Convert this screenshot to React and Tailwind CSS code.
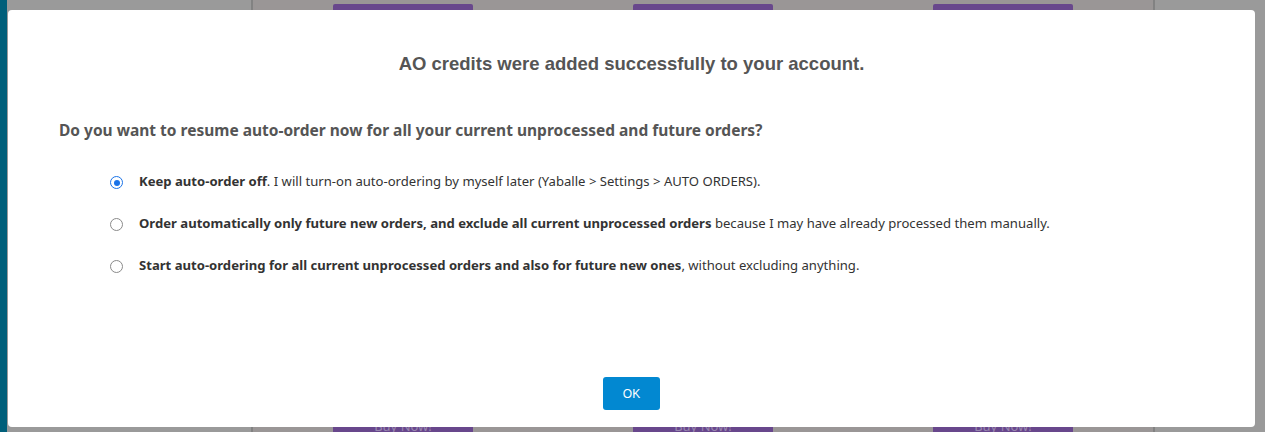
import { useState } from "react";

const options = [
    { bold: "Keep auto-order off", rest: ". I will turn-on auto-ordering by myself later (Yaballe > Settings > AUTO ORDERS)." },
    { bold: "Order automatically only future new orders, and exclude all current unprocessed orders", rest: " because I may have already processed them manually." },
    { bold: "Start auto-ordering for all current unprocessed orders and also for future new ones", rest: ", without excluding anything." },
];

const BuyColumn = () => (
    <div className="flex-1 flex flex-col justify-between items-center">
        <div className="w-[140px] h-[14px] mt-[4px] bg-[#68478c] rounded-t-[2px]"></div>
        <div className="w-[140px] h-[14px] bg-[#68478c] text-[#9a88b0] text-[13px] leading-[14px] text-center pt-[1px]">Buy Now!</div>
    </div>
);

const Radio = ({ checked, onClick }) => (
    <button type="button" onClick={onClick} className="shrink-0 mt-[4px]">
        {checked ? (
            <span className="flex w-[13px] h-[13px] rounded-full border-[1.5px] border-[#1a73e8] items-center justify-center">
                <span className="w-[6px] h-[6px] rounded-full bg-[#1a73e8]"></span>
            </span>
        ) : (
            <span className="block w-[13px] h-[13px] rounded-full border-[1.5px] border-[#8a8a8a]"></span>
        )}
    </button>
);

export default function App() {
    const [choice, setChoice] = useState(0);

    return (
        <div className="relative w-full h-[432px] overflow-hidden flex bg-[#9a9a9a]">
            <div className="w-[7px] bg-[#005f7a]"></div>
            <div className="flex-1 flex">
                <div className="w-[246px] border-r-2 border-[#828282]"></div>
                <div className="w-[900px] flex bg-[#9a9696]">
                    <BuyColumn />
                    <BuyColumn />
                    <BuyColumn />
                </div>
                <div className="flex-1 border-l-2 border-[#828282]"></div>
            </div>

            <div className="absolute left-[8px] top-[10px] w-[1247px] h-[417px] bg-white rounded-[4px] flex flex-col font-['Noto_Sans',sans-serif]">
                <h2 className="mt-[42px] text-center text-[18.5px] leading-[24px] font-bold text-[#555] font-['Liberation_Sans',sans-serif]">
                    AO credits were added successfully to your account.
                </h2>
                <p className="mt-[44px] ml-[51px] text-[15.5px] leading-[20px] font-bold text-[#555]">
                    Do you want to resume auto-order now for all your current unprocessed and future orders?
                </p>
                <div className="mt-[32px] ml-[102px] flex flex-col gap-[24px]">
                    {options.map((o, i) => (
                        <label key={i} className="flex items-start gap-[16px] text-[13.1px] leading-[18px] text-[#333] cursor-pointer" onClick={() => setChoice(i)}>
                            <Radio checked={choice === i} onClick={() => setChoice(i)} />
                            <span><b className="font-bold">{o.bold}</b>{o.rest}</span>
                        </label>
                    ))}
                </div>
                <div className="mt-auto mb-[17px] flex justify-center">
                    <button type="button" className="w-[57px] h-[33px] rounded-[3px] bg-[#0288d1] text-white text-[12px] font-['Liberation_Sans',sans-serif]">
                        OK
                    </button>
                </div>
            </div>
        </div>
    );
}
